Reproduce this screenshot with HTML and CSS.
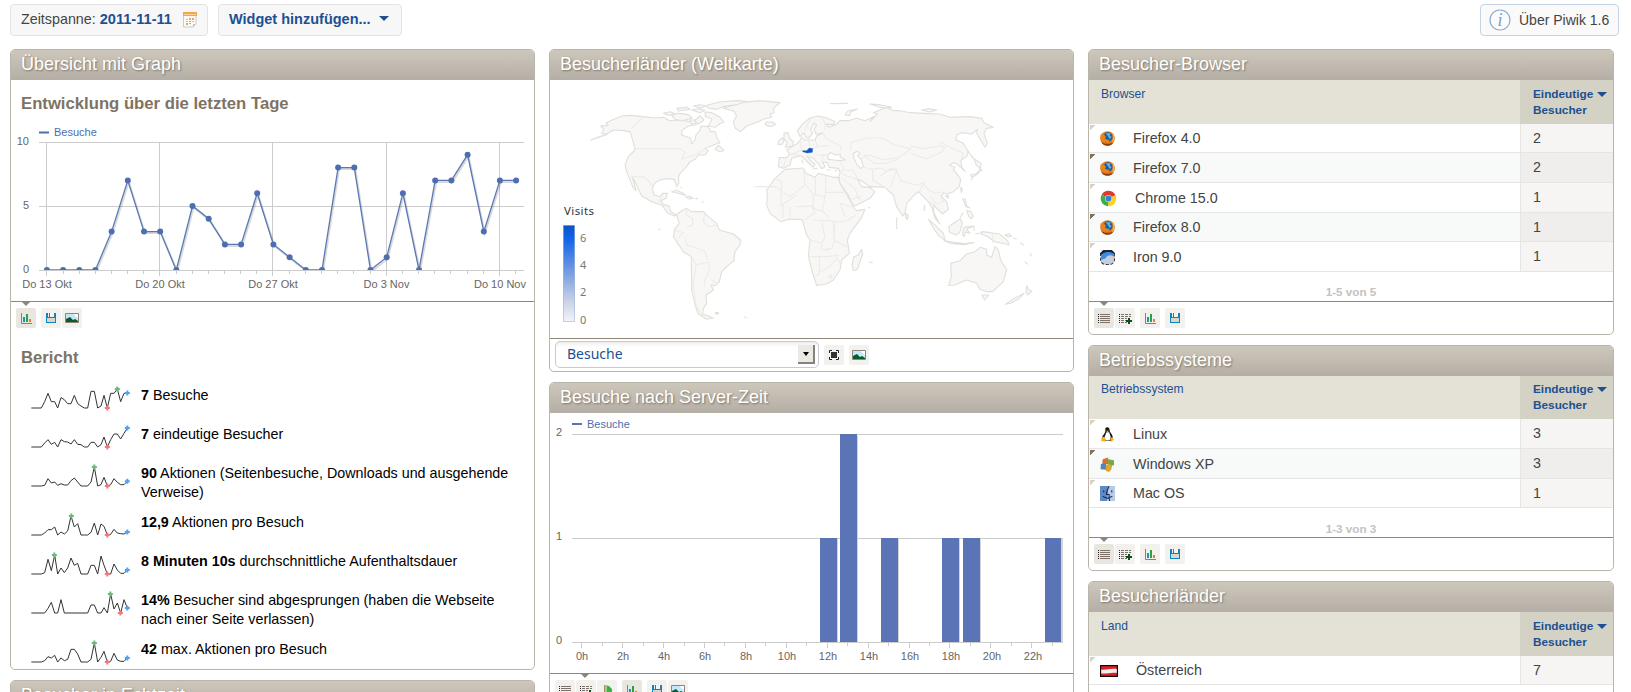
FILE: index.html
```html
<!DOCTYPE html>
<html lang="de">
<head>
<meta charset="utf-8">
<title>Piwik – Dashboard</title>
<link rel="stylesheet" href="styles.css">
</head>
<body>
<svg class="defs" width="0" height="0" aria-hidden="true">
  <defs>
    <marker id="dot" markerUnits="userSpaceOnUse" markerWidth="8" markerHeight="8" refX="4" refY="4"><circle cx="4" cy="4" r="3" fill="#4d6fb0"/></marker>
    <linearGradient id="scale" x1="0" y1="0" x2="0" y2="1"><stop offset="0" stop-color="#0d52c8"/><stop offset=".14" stop-color="#1164ea"/><stop offset=".5" stop-color="#7a9fdf"/><stop offset=".8" stop-color="#ccd4e8"/><stop offset="1" stop-color="#f2f3f8"/></linearGradient>
    <path id="mk" d="M-7.500-3h4.500v-4.500h6v4.500h4.500v6h-4.500v4.500h-6v-4.500h-4.500z"/>
    <symbol id="i-chart" viewBox="0 0 20 20"><path d="M5.500 5v10.500H16" fill="none" stroke="#8a7d72"/><path fill="#1795c9" d="M7 9h2v5H7z"/><path fill="#2ca13c" d="M10 6h2v8h-2z"/><path fill="#f47e1c" d="M13 11h2v3h-2z"/></symbol>
    <symbol id="i-save" viewBox="0 0 20 20"><path fill="#0c84c4" d="M5 5h2v4h1V5h1v4h4V5h2v10H5z"/><path fill="#fff" d="M9 5h1v3H9zM12 5h1v3h-1z"/><path fill="#d9d6cd" d="M6 10h8v4H6z"/></symbol>
    <symbol id="i-img" viewBox="0 0 20 20"><path fill="#c3e7fb" stroke="#8f8579" d="M3.500 5.500h13v9h-13z"/><path fill="#fff" d="M12 6h4v4l-2-1z"/><path fill="#0a5a2a" d="M4 14v-3l2-1 2-1 3 3 2-1 3 2v1z"/></symbol>
    <symbol id="i-table" viewBox="0 0 20 20"><path stroke="#222" stroke-dasharray="1 1" d="M4.500 6v9" /><path stroke="#7d7168" d="M6 6.500h10M6 8.500h10M6 10.500h10M6 12.500h10M6 14.500h10"/></symbol>
    <symbol id="i-more" viewBox="0 0 20 20"><path stroke="#222" stroke-dasharray="1 1" d="M4.500 6v9" /><path stroke="#7d7168" stroke-dasharray="3 1" d="M6 6.500h10M6 8.500h10M6 10.500h6M6 12.500h5M6 14.500h6"/><path stroke="#0a4f22" stroke-width="2" d="M14 10v6M11 13h6"/></symbol>
    <symbol id="i-goal" viewBox="0 0 20 20"><path stroke="#a89060" d="M7.500 5v11"/><path fill="#3fae49" d="M8 5l4 1 3 3v7l-3-2-4-1z"/><path fill="#8bd58c" d="M8 5h2v7H8z"/></symbol>
    <symbol id="i-full" viewBox="0 0 20 20"><path fill="none" stroke="#222" d="M5.500 8V5.500H8M12 5.500h2.500V8M14.500 12v2.500H12M8 14.500H5.500V12"/><path fill="#333" d="M7 7h6v6H7z"/></symbol>
    <symbol id="b-ff" viewBox="0 0 14 14"><circle cx="7" cy="7" r="6.800" fill="#e27a1d"/><path fill="#8b3c12" d="M1 10a6.700 6.700 0 0 0 12 0c-2 2-9 3-12 0z"/><circle cx="7.500" cy="5.500" r="4.300" fill="#1c5f9c"/><path fill="#5fb4e0" d="M5.500 2h4.500l-1 2.500 2 1-2 2-1-2z"/><path fill="#e98322" d="M.4 3l1.600 1 2-.6L5.500 5.500 4.500 7l3 1.500L9 8 8 10.500 4 10 1 8z"/><path fill="#f8b53c" d="M11.500 2C14 4 14.500 9 11 12c1-3 1.500-6 .5-10z"/></symbol>
    <symbol id="b-cr" viewBox="0 0 16 16"><path fill="#dd3b2e" d="M8 8L1.700 4.200A7.300 7.300 0 0 1 14.600 5z"/><path fill="#fbd01f" d="M8 8l6.600-3A7.300 7.300 0 0 1 7.500 15.300z"/><path fill="#3fae49" d="M8 8l-.5 7.300A7.300 7.300 0 0 1 1.700 4.200z"/><circle cx="8" cy="8" r="3.300" fill="#dfe9f5"/><circle cx="8" cy="8" r="2.800" fill="#3a7fd0"/></symbol>
    <symbol id="b-ir" viewBox="0 0 14 14"><rect x=".5" y=".5" width="13" height="13" rx="4.500" fill="#c9ccdb" stroke="#3a3f4a" stroke-dasharray="3 1.500"/><path fill="#1c2430" d="M3 0h8l3 3v1L8 2 0 5V3z"/><path fill="#3a8de0" d="M1 5c3-4 9-4 12-1v2C9 4 7 5 5 8L1 9z"/></symbol>
    <symbol id="o-lx" viewBox="0 0 14 14"><path fill="#151515" d="M5 1c2-1.500 4-.5 4 2 0 2 3 4 3 7l-2 3H5l-3-3c0-2 3-4 3-6z"/><path fill="#fff" d="M6 5h2.500l1.500 4-1 3.500H5.500L4 10z"/><path fill="#f5b614" d="M5.500 3.500h3L7 5zM1.500 10l2-1 2 3-.5 1.800L1 13zM9.500 10l2.500-.5.8 2.500L10 14z"/></symbol>
    <symbol id="o-win" viewBox="0 0 14 14"><path fill="#d8702f" d="M2.500 2l5-1.500v6L2 7z"/><path fill="#78a845" d="M7.500 2l5.500 1v5L7 7z"/><path fill="#4f86bd" d="M.8 6.500L5.500 6l.5 6-5.500-.5z"/><path fill="#dfa52e" d="M5.500 7l6 .5-1 4.500-2 2-3-1z"/></symbol>
    <symbol id="o-mac" viewBox="0 0 14 14"><path fill="#5d8bc8" d="M0 0h8L7 14H0z"/><path fill="#b5cbeb" d="M8 0h6v14H7z"/><path fill="none" stroke="#1b2c55" d="M8.500 0C7 3 6 6 6 8h2.500c0 2 0 4 .5 6M3.500 4v2M11 4v2M2.500 9.500c2.500 2.200 6 2.200 9 0"/></symbol>
  </defs>
</svg>

<header class="topbar">
  <div class="pill period"><span>Zeitspanne: <b>2011-11-11</b></span>
    <svg width="14" height="16" viewBox="0 0 14 16"><path fill="#fbfaf7" stroke="#cfcbc4" d="M.5 1.500h12.500v10l-3 3.500H.5z"/><path fill="#f5a646" d="M0 0h14v4H0z"/><path fill="#fbd3a0" d="M1 2h12v1H1z"/><path fill="#e9a75a" d="M6 6h2v2H6zM9 6h2v2H9zM3 9h2v1H3zM6 9h2v1H6zM3 11h2v2H3zM6 11h2v1H6z"/><path fill="#c9c4bb" d="M3 7h2v1H3zM9 9h2v1H9zM10 12h3l-3 3z"/></svg>
  </div>
  <div class="pill add"><b>Widget hinzufügen...</b><i class="caret"></i></div>
  <div class="pill about"><svg width="22" height="22" viewBox="0 0 22 22"><circle cx="11" cy="11" r="10" fill="#fbfcfe" stroke="#8ea9cf" stroke-width="1.200"/><text x="11" y="17" text-anchor="middle" class="info">i</text></svg><span>Über Piwik 1.6</span></div>
</header>

<main class="dashboard">
  <section class="col">
    <article class="widget overview">
      <h1>Übersicht mit Graph</h1>
      <h2>Entwicklung über die letzten Tage</h2>
      <svg class="plot" width="523" height="178" viewBox="11 123 523 178">
        <path stroke="#4d6fb0" stroke-width="2" d="M39 132.500h10"/><text class="lg" x="54" y="136">Besuche</text>
        <path stroke="#ccc" fill="none" d="M39 142.500h485M39 206.500h485M39 270.500h485M46.500 142v134M159.500 142v134M272.500 142v134M386.500 142v134M499.500 142v134M63.500 271v3M79.500 271v3M95.500 271v3M111.500 271v3M127.500 271v3M143.500 271v3M176.500 271v3M192.500 271v3M208.500 271v3M224.500 271v3M240.500 271v3M256.500 271v3M289.500 271v3M305.500 271v3M321.500 271v3M337.500 271v3M353.500 271v3M370.500 271v3M402.500 271v3M418.500 271v3M434.500 271v3M450.500 271v3M467.500 271v3M483.500 271v3M515.500 271v3"/>
        <g class="ax"><text x="29" y="145" text-anchor="end">10</text><text x="29" y="209" text-anchor="end">5</text><text x="29" y="273" text-anchor="end">0</text>
        <g text-anchor="middle"><text x="47" y="288">Do 13 Okt</text><text x="160" y="288">Do 20 Okt</text><text x="273" y="288">Do 27 Okt</text><text x="386.500" y="288">Do 3 Nov</text><text x="500" y="288">Do 10 Nov</text></g></g>
        <clipPath id="above"><path d="M11 123h523v147H11z"/></clipPath>
        <g clip-path="url(#above)" fill="none">
        <polyline stroke="#000" stroke-opacity=".15" stroke-width="2" transform="translate(1 1.500)" points="95.4,270 111.6,231.6 127.8,180.4 144,231.6 160.2,231.6 176.3,270 192.5,206 208.7,218.8 224.9,244.4 241.1,244.4 257.2,193.2 273.4,244.4 289.6,257.2 305.8,270 322,270 338.1,167.6 354.3,167.6 370.5,270 386.7,257.2 402.9,193.2 419,270 435.2,180.4 451.4,180.4 467.6,154.8 483.8,231.6 499.9,180.4 516.1,180.4"/>
        <polyline class="series" points="46.9,270 63.1,270 79.3,270 95.4,270 111.6,231.6 127.8,180.4 144,231.6 160.2,231.6 176.3,270 192.5,206 208.7,218.8 224.9,244.4 241.1,244.4 257.2,193.2 273.4,244.4 289.6,257.2 305.8,270 322,270 338.1,167.6 354.3,167.6 370.5,270 386.7,257.2 402.9,193.2 419,270 435.2,180.4 451.4,180.4 467.6,154.8 483.8,231.6 499.9,180.4 516.1,180.4"/></g>
      </svg>
      <div class="tools"><i class="pointer"></i><svg class="tool on"><use href="#i-chart"/></svg><svg class="tool gap"><use href="#i-save"/></svg><svg class="tool"><use href="#i-img"/></svg></div>
      <h2 class="report">Bericht</h2>
      <ul class="sparks">
        <li><svg viewBox="0 0 300 75"><polyline points="4,66 14,66 24,66 34,66 44,47 54,22 64,47 74,47 83,66 93,35 103,41 113,53 123,53 133,28 143,53 153,60 163,66 173,66 183,16 193,16 203,66 213,60 222,28 232,66 242,22 252,22 262,9 272,47 282,22 292,22"/><use href="#mk" class="hi" x="262" y="9"/><use href="#mk" class="lo" x="232" y="66"/><use href="#mk" class="now" x="292" y="21"/></svg><p><b>7</b> Besuche</p></li>
        <li><svg viewBox="0 0 300 75"><polyline points="4,66 14,66 24,66 34,66 44,54 54,44 64,58 74,52 83,66 93,44 103,50 113,51 123,57 133,44 143,58 153,59 163,66 173,66 183,52 193,52 203,66 213,59 222,36 232,66 242,44 252,27 262,27 272,42 282,25 292,9"/><use href="#mk" class="lo" x="232" y="66"/><use href="#mk" class="now" x="292" y="9"/></svg><p><b>7</b> eindeutige Besucher</p></li>
        <li class="two"><svg viewBox="0 0 300 75"><polyline points="4,66 14,66 24,66 34,66 44,64 54,44 64,57 74,54 83,64 93,59 103,63 113,63 123,50 133,42 143,54 153,66 163,66 173,66 183,54 193,9 203,66 213,62 222,40 232,66 242,62 252,44 262,55 272,62 282,62 292,52"/><use href="#mk" class="hi" x="193" y="9"/><use href="#mk" class="lo" x="232" y="66"/><use href="#mk" class="now" x="292" y="52"/></svg><p><b>90</b> Aktionen (Seitenbesuche, Downloads und ausgehende Verweise)</p></li>
        <li><svg viewBox="0 0 300 75"><polyline points="4,66 14,66 24,66 34,66 44,60 54,50 64,50 74,42 83,66 93,57 103,63 113,54 123,9 133,42 143,32 153,66 163,66 173,66 183,58 193,30 203,66 213,33 222,40 232,66 242,64 252,49 262,60 272,62 282,63 292,57"/><use href="#mk" class="hi" x="124" y="9"/><use href="#mk" class="lo" x="232" y="66"/><use href="#mk" class="now" x="292" y="57"/></svg><p><b>12,9</b> Aktionen pro Besuch</p></li>
        <li><svg viewBox="0 0 300 75"><polyline points="4,66 14,66 24,66 34,66 44,62 54,22 64,56 74,9 83,66 93,48 103,62 113,48 123,18 133,40 143,34 153,66 163,66 173,66 183,40 193,40 203,66 213,12 222,40 232,66 242,66 252,36 262,54 272,64 282,64 292,54"/><use href="#mk" class="hi" x="73" y="9"/><use href="#mk" class="lo" x="232" y="66"/><use href="#mk" class="now" x="292" y="54"/></svg><p><b>8 Minuten 10s</b> durchschnittliche Aufenthaltsdauer</p></li>
        <li class="two"><svg viewBox="0 0 300 75"><polyline points="4,66 44,66 54,52 64,34 74,66 83,66 93,26 103,66 173,66 183,42 193,42 203,66 213,66 222,50 232,66 242,9 252,54 262,36 272,66 282,26 292,51"/><use href="#mk" class="hi" x="241" y="9"/><use href="#mk" class="lo" x="271" y="66"/><use href="#mk" class="now" x="292" y="51"/></svg><p><b>14%</b> Besucher sind abgesprungen (haben die Webseite nach einer Seite verlassen)</p></li>
        <li><svg viewBox="0 0 300 75"><polyline points="4,66 14,66 24,66 34,66 44,62 54,50 64,54 74,46 83,66 93,54 103,62 113,58 123,28 133,28 143,42 153,66 163,66 173,66 183,58 193,9 203,66 213,52 222,34 232,66 242,64 252,40 262,60 272,64 282,64 292,54"/><use href="#mk" class="hi" x="193" y="9"/><use href="#mk" class="lo" x="232" y="66"/><use href="#mk" class="now" x="292" y="54"/></svg><p><b>42</b> max. Aktionen pro Besuch</p></li>
      </ul>
    </article>
    <article class="widget"><h1>Besucher in Echtzeit</h1></article>
  </section>

  <section class="col">
    <article class="widget map">
      <h1>Besucherländer (Weltkarte)</h1>
      <svg class="plot" width="523" height="258" viewBox="550 80 523 258">
        <g class="land" transform="translate(580 90) scale(.33333)">
          <path d="M32 150L62 140 82 133 65 130 72 118 62 108 85 106 78 98 105 86 125 78 150 76 190 80 225 84 250 82 270 92 300 90 330 95 345 90 360 78 372 90 358 100 345 105 325 108 305 122 305 135 332 145 335 162 345 150 348 135 360 122 363 108 385 110 392 125 405 125 412 145 420 158 400 165 375 175 385 182 375 195 355 195 345 208 330 215 320 230 300 250 295 262 297 278 290 290 283 268 262 266 240 270 225 278 217 295 222 315 240 320 248 310 262 310 258 325 243 332 250 345 268 348 272 365 290 375 283 378 262 368 245 345 215 335 185 318 172 290 158 262 168 302 158 290 148 265 140 245 135 225 145 200 165 180 158 150 150 125 130 122 100 120 80 132Z"/>
          <path d="M445 50L480 38 540 32 600 38 580 55 582 68 570 72 575 82 550 88 535 95 500 108 482 125 466 115 460 95 470 78 462 64 430 55ZM555 100l5-4 20 1 7 6-12 6-15-2zM405 178l10-12 10 8 6 8-12 3zM275 305l15-4 18 8 10 8-18-6zM318 322l10-3 12 6-10 2zM346 326h8M368 332v6M303 290l2 6M406 668h9v4h-7zM493 680l8 3M235 418h7M364 257h1"/>
          <path d="M250 70l20-5 15 6-20 5zM275 76l20-6 30 4 12 10-30 8-22-4zM290 55l30-3 10 6-35 5zM335 60l20-4 20 5-15 7zM340 48l20-4 18 4-15 6zM375 66l20 2 25 14 12 14-14 6-12 10-22-4 8-12 4-10-20-6zM330 90l12 0 8 8-15 4zM380 46l40-10 50-4 30 2-30 10-40 6-20 8-25-4z"/>
          <path d="M290 375L305 362 320 355 335 365 370 365 385 380 410 400 418 420 460 432 482 450 480 465 465 485 462 512 440 530 425 545 418 575 405 587 393 585 400 600 378 615 380 640 370 655 368 672 400 684 380 688 355 672 345 645 335 600 334 500 310 485 280 440 285 415 298 400Z"/>
          <path class="border" d="M165 176H300L315 187 305 207 350 193 385 170M190 80L155 115M150 258L195 262 220 290M235 335l10-10M268 348l-15-6M322 355l-4 20 20 10v20l-15 5M285 420l25 8-15 15M315 440l5 25 20 5 35 15 8 25M334 500l15 24 35-8 5 20-16 40 0 12M348 525l-8 60 8 60 18 30M375 370l-5 25 15 15 25-5M393 568l20 15"/>
        </g>
        <g class="land" transform="translate(790 90) scale(.33333)">
          <path d="M22 122L40 100 60 84 85 78 110 84 135 95 130 104 108 102 118 112 140 102 150 92 175 92 200 85 225 92 250 80 240 95 262 72 250 68 290 52 310 62 330 62 360 68 400 70 450 72 480 82 540 80 575 85 582 98 610 112 590 115 582 130 592 160 585 172 572 150 560 130 562 118 545 132 515 128 500 135 498 150 520 160 535 185 530 200 512 212 516 232 525 244 512 232 502 222 490 218 478 226 495 232 490 240 500 250 512 268 508 290 490 305 470 312 460 308 455 320 470 335 475 358 458 372 440 355 432 345 430 365 445 395 450 402 435 385 425 350 415 335 400 320 385 305 370 318 350 340 345 370 338 378 320 350 310 315 298 305 285 292 240 290 210 270 203 268 215 290 238 292 255 305 240 325 195 348 187 342 175 315 150 280 147 262 150 245 145 235 118 232 112 218 98 216 105 230 95 236 85 222 70 205 50 198 62 212 75 222 70 232 62 225 45 208 35 198 20 200 5 205 0 225 -20 235 -35 230 -32 203 -8 202 -2 192 -10 180 5 170 20 162 30 152 35 142 45 150 75 150 80 138 98 130 78 132 72 118 80 105 72 100 62 118 68 130 55 145 45 140 42 128 30 140Z"/>
          <path d="M-15 238L40 234 48 250 75 262 85 250 130 262 145 262 150 280 185 340 192 355 200 362 225 358 215 382 180 430 172 450 178 490 155 510 150 540 130 570 110 582 80 586 68 550 55 500 60 450 50 435 40 400 35 388-5 388-28 395-60 370-70 345-68 320-70 300-45 265Z"/>
          <path d="M-18 130l12-2 4 16 12 12-2 12-22 4 6-12-10-14zM-34 152l10-8 6 4-4 14-14 2zM215 478l3 14-16 46-12 4-4-17 6-25 13-5zM347 370l8 8-3 10-5-4z"/>
          <path d="M482 520L510 512 530 492 555 485 570 472 590 478 590 495 605 502 615 470 625 480 632 510 650 540 640 575 608 605 590 605 570 598 560 580 530 570 495 585 476 586 484 560ZM576 615l20 0-12 15zM710 587l6 12 10 4-14 12-4-12zM702 610l-15 16-25 14-16 3 25-17 20-10z"/>
          <path d="M416 388l20 18 24 24 6 22-20-15-18-26zM462 452l30 5 30 4 30-3-30 6-40-4zM476 410l20-14 15-10 6 14-8 28-10 7-20-8zM522 412l30-4-22 10 10 12-14-4-3 14-6-6zM575 425l20 2 35 6 22 18 6 14-25-6-20-4-18-14-20-8zM645 435l12-4 8 8-10 2zM670 444l10 4M690 458l12 8M722 488l1 10M704 515l10 8M518 326l8 2 4 20 10 6-12-4zM530 362l12 2 8 14-6 8-8-8zM510 382l10-14M512 292l5 6-3 10zM466 318l10-2-2 8zM543 195l10 14 5 14 18 18-12 4-4 6-18 4 2 6 8-2 14-10 8-28-20-14M532 180l16 24M548 260l-4 12M403 345v18M320 382v35M235 353h5M238 517h10M552 408v15M556 432l20-4M120 41l55-1M240 42l30 2 35 8-20 2-22-4zM165 75l8-12 30-6-20 8-4 12zM395 60l20-4 25 4-20 6zM36 208l3 12M68 238l16-4M110 240l12 0M134 243l8-3"/>
          <path class="sea" d="M115 208l-2-14 10-6 15 8 14-4-2 8 16 10-20 2-14-2zM190 190l12-6 8 6-8 6 12 14 6 20-8 6-12-14-8-18z"/>
          <path class="border" d="M62 84L45 120M92 80l14 20-2 20M95 125l15 22 40 20 5 15M30 155l5 25-35 15M75 150l8 20-40 15M85 170l30-4M80 195l35 0M95 215l5-20M55 150l5 18M-2 192l35 5M-12 205l-8 28M182 180l0-22 45-14 50 0 35 20 50 12-15 14-20 12-45 8-48-16-22 14M360 168l40 8 50-8 15 4-10 14-45 20-48-16M450 155l35 20 35 14-6 20M215 230l30 8 25-4 20 8 28-4M222 195l30 25 35 0 20-6 20-8M248 240l0 30 40 24M270 260l30-24 20 2-10 30-8 25M318 240l16 34 48 12 20-8-14 28M400 280l15 20 20 10 20-5M420 320l20 22 20-8-10-20M415 335l20 10M150 212l12 26-14 10 22 10 30 10M165 240l24 0 14 26M155 265l40 30 10 30 10 6M185 328l30-10M40 235l6 50-46 35-45-30-60 0M-45 265l20 10-2 75M46 285l25 28 36 8M76 262v52M107 257v50h55M107 307l-10 55 20 20M-25 345l45-30M20 350l45-2 10 20-30 22M70 315v40l30 10M70 390l50 2 30 4M150 395l20-2 28-18M150 340l16 40M150 340l35 10M60 450l35 10 10-20-10-45M95 460l0 20 30-5 8-20-3-60M135 400l-4 50 40 20M55 500l50 0 40-4M105 480l12 0M88 502l0 50-16 10M88 545l30-14 22-25M140 500l10 20M115 560l10-6 0 10zM-20 345l-2 40M0 350l0 38M608 430v28"/>
          <path d="M38 182l12 0 8-8 10 2-1 11-15 2-14-4z" class="at"/>
        </g>
        <g class="mt"><text x="564" y="215" class="mv">Visits</text><text x="580" y="242">6</text><text x="580" y="269">4</text><text x="580" y="296">2</text><text x="580" y="324">0</text></g>
        <rect x="563.500" y="225.500" width="11" height="96" fill="url(#scale)" stroke="#1c4fa8" stroke-opacity=".25"/>
      </svg>
      <div class="tools select-row"><div class="select"><span>Besuche</span><i class="drop"></i></div><svg class="tool gap"><use href="#i-full"/></svg><svg class="tool gap"><use href="#i-img"/></svg></div>
    </article>
    <article class="widget">
      <h1>Besuche nach Server-Zeit</h1>
      <svg class="plot" width="523" height="260" viewBox="550 413 523 260">
        <path stroke="#5a74b5" stroke-width="2" d="M572 424h10"/><text class="lg" x="587" y="428">Besuche</text>
        <path stroke="#ccc" d="M572 434.500h491M572 538.500h491M572 642.500h491M581.500 643v5M622.500 643v5M663.500 643v5M704.500 643v5M745.500 643v5M786.500 643v5M827.500 643v5M868.500 643v5M909.500 643v5M949.500 643v5M990.500 643v5M1031.500 643v5M602.500 643v3M643.500 643v3M684.500 643v3M724.500 643v3M765.500 643v3M806.500 643v3M847.500 643v3M888.500 643v3M929.500 643v3M970.500 643v3M1011.500 643v3M1052.500 643v3"/>
        <path fill="#d4d4d4" d="M835 539h3v103h-3zM855 436h3v206h-3zM896 539h3v103h-3zM957 539h3v103h-3zM978 539h3v103h-3zM1060 539h3v103h-3z"/>
        <path fill="#5a74b5" d="M820 538h17v104h-17zM840 434h17v208h-17zM881 538h17v104h-17zM942 538h17v104h-17zM963 538h17v104h-17zM1045 538h16v104h-16z"/>
        <g class="ax"><text x="562" y="436" text-anchor="end">2</text><text x="562" y="540" text-anchor="end">1</text><text x="562" y="644" text-anchor="end">0</text>
        <g text-anchor="middle"><text x="582" y="660">0h</text><text x="623" y="660">2h</text><text x="664" y="660">4h</text><text x="705" y="660">6h</text><text x="746" y="660">8h</text><text x="787" y="660">10h</text><text x="828" y="660">12h</text><text x="869" y="660">14h</text><text x="910" y="660">16h</text><text x="951" y="660">18h</text><text x="992" y="660">20h</text><text x="1033" y="660">22h</text></g></g>
      </svg>
      <div class="tools"><i class="pointer second"></i><svg class="tool"><use href="#i-table"/></svg><svg class="tool"><use href="#i-more"/></svg><svg class="tool"><use href="#i-goal"/></svg><svg class="tool on gap"><use href="#i-chart"/></svg><svg class="tool gap"><use href="#i-save"/></svg><svg class="tool"><use href="#i-img"/></svg></div>
    </article>
  </section>

  <section class="col wide">
    <article class="widget">
      <h1>Besucher-Browser</h1>
      <div class="thead"><span>Browser</span><b>Eindeutige<i class="caret"></i><br>Besucher</b></div>
      <div class="row short"><span><svg width="15" height="15"><use href="#b-ff"/></svg>Firefox 4.0</span><em>2</em></div>
      <div class="row alt"><span><svg width="15" height="15"><use href="#b-ff"/></svg>Firefox 7.0</span><em>2</em></div>
      <div class="row"><span><svg width="17" height="17"><use href="#b-cr"/></svg>Chrome 15.0</span><em>1</em></div>
      <div class="row alt short"><span><svg width="15" height="15"><use href="#b-ff"/></svg>Firefox 8.0</span><em>1</em></div>
      <div class="row"><span><svg width="15" height="15"><use href="#b-ir"/></svg>Iron 9.0</span><em>1</em></div>
      <div class="pages">1-5 von 5</div>
      <div class="tools"><i class="pointer"></i><svg class="tool on"><use href="#i-table"/></svg><svg class="tool"><use href="#i-more"/></svg><svg class="tool gap"><use href="#i-chart"/></svg><svg class="tool gap"><use href="#i-save"/></svg></div>
    </article>
    <article class="widget">
      <h1>Betriebssysteme</h1>
      <div class="thead tight"><span>Betriebssystem</span><b>Eindeutige<i class="caret"></i><br>Besucher</b></div>
      <div class="row"><span><svg width="15" height="15"><use href="#o-lx"/></svg>Linux</span><em>3</em></div>
      <div class="row alt"><span><svg width="15" height="15"><use href="#o-win"/></svg>Windows XP</span><em>3</em></div>
      <div class="row short"><span><svg width="15" height="15"><use href="#o-mac"/></svg>Mac OS</span><em>1</em></div>
      <div class="pages late">1-3 von 3</div>
      <div class="tools"><i class="pointer"></i><svg class="tool on"><use href="#i-table"/></svg><svg class="tool"><use href="#i-more"/></svg><svg class="tool gap"><use href="#i-chart"/></svg><svg class="tool gap"><use href="#i-save"/></svg></div>
    </article>
    <article class="widget">
      <h1>Besucherländer</h1>
      <div class="thead"><span>Land</span><b>Eindeutige<i class="caret"></i><br>Besucher</b></div>
      <div class="row short"><span><svg width="18" height="12" viewBox="0 0 18 12"><path fill="#d8232a" stroke="#1a0505" stroke-width="1.200" d="M.6.6h16.800v10.800H.6z"/><path fill="#f3eeee" d="M1.200 4.500c5 1 9-1.500 15.600-.5V8c-5.600-1-10 1-15.600.5z"/></svg>Österreich</span><em>7</em></div>
      <div class="row plain"></div>
    </article>
  </section>
</main>
</body>
</html>
```
FILE: styles.css
```css
* { box-sizing: border-box; }
html, body { height: 692px; overflow: hidden; }
body { margin: 0; background: #fff; color: #444; font-family: "Liberation Sans", Arial, sans-serif; font-size: 14.3px; }
h1, h2, p, ul { margin: 0; padding: 0; }
svg { display: block; flex: none; }
.defs { position: absolute; }

.topbar { display: flex; height: 49px; padding: 4px 12px 0 10px; gap: 10px; }
.pill { display: flex; align-items: center; height: 32px; border: 1px solid #e3e3e3; border-radius: 4px; background: #f7f7f7; padding: 0 10px; white-space: nowrap; }
.pill span, .pill > b { padding-bottom: 3px; }
.pill b { color: #1d5091; }
.period { width: 198px; justify-content: space-between; }
.period b { font-size: 14.600px; }
.add { width: 184px; }
.add b { font-size: 14.500px; }
.caret { display: inline-block; border: 4.500px solid transparent; border-top: 5px solid #1d5091; border-bottom: 0; }
.add .caret { margin-left: 8px; margin-top: -3px; border-width: 5px 5px 0; }
.pill.about { margin-left: auto; width: 139px; padding: 0 8px; gap: 8px; border-color: #c5d3e8; background: #fafafa; font-size: 14px; }
.about span { padding-bottom: 0; }
.info { font: italic 18px "Liberation Serif", serif; fill: #7f9cc6; }

.dashboard { display: grid; grid-template-columns: 525px 525px 526px; gap: 14px; padding-left: 10px; align-items: start; }
.col { display: flex; flex-direction: column; gap: 10px; }
.widget { border: 1px solid #bab5aa; border-radius: 5px; overflow: hidden; background: #fff; }
.overview { height: 621px; }
.map { height: 323px; }
h1 { height: 30px; padding-left: 10px; line-height: 29px; font-size: 18px; font-weight: normal; color: #fff; text-shadow: 1px 1px 2px #7e7363; background: linear-gradient(#cdc7bb, #b4aea6); }
h2 { height: 43px; padding-left: 10px; line-height: 47px; font-size: 16.700px; color: #7e7363; }

.lg { font-size: 11px; fill: #4d6fb0; }
.ax { font-size: 11px; fill: #666; }
.series { stroke: #5a78b5; stroke-width: 1.300; marker: url(#dot); }

.tools { position: relative; display: flex; height: 33px; padding: 6px 5px 0; gap: 1px; border-top: 1px solid #8f8579; }
.tool { width: 20px; height: 20px; border-radius: 2px; background: #f2f1ed; }
.tool.on { background: #e8e7df; }
.tool.gap { margin-left: 4px; }
.pointer { position: absolute; left: 11px; top: 0; border: 4px solid transparent; border-top-color: #8f8579; border-bottom: 0; }
.pointer.second { left: 31px; }

.report { height: 51px; line-height: 47px; }
.sparks { list-style: none; padding-left: 19px; color: #000; }
.sparks li { display: flex; height: 39px; }
.sparks li.two { height: 49px; }
.sparks svg { width: 100px; height: 25px; margin-top: 1px; }
.sparks p { width: 375px; margin: 1px 0 0 11px; line-height: 19px; }
.sparks polyline { fill: none; stroke: #333; stroke-width: 3; }
.hi { fill: #6cba76; }
.lo { fill: #fb7672; }
.now { fill: #4da3fb; }

.land path { fill: #f8f7f5; stroke: #e0dfda; stroke-width: 3.300; stroke-linejoin: round; }
.land .border { fill: none; stroke: #ecebe7; }
.land .sea { fill: #fff; }
.land .at { fill: #0d55cc; stroke: #0d4db5; stroke-width: 1; }
.mt { font: 11px "Noto Sans", sans-serif; fill: #777; }
.mv { font-size: 11.500px; fill: #333; letter-spacing: .4px; }
.select-row { padding-top: 2px; }
.select-row .tool { margin-top: 4px; }
.select { display: flex; align-items: center; justify-content: space-between; width: 264px; height: 27px; padding: 0 3px 0 11px; border: 1px solid #c9c9d0; border-radius: 5px; background: linear-gradient(#ededed, #fff 5px); font: 14px "Noto Sans", sans-serif; color: #1d5091; }
.select span { padding-bottom: 2px; }
.drop { display: grid; place-items: center; width: 17px; height: 19px; background: #ece9e4; border-right: 2px solid #85817b; border-bottom: 2px solid #85817b; }
.drop::before { content: ""; border: 3.500px solid transparent; border-top: 4px solid #000; border-bottom: 0; }

.thead, .row { display: grid; grid-template-columns: 431px 93px; }
.thead { height: 44px; font-size: 12.100px; color: #1d5091; line-height: 16px; background: #e4e2d7; }
.thead span { padding: 6px 0 0 12px; }
.thead b { padding: 6px 0 0 13px; font-size: 11.800px; background: #d4d1c5; }
.thead .caret { margin: 0 0 1px 4px; border-width: 5px 5px 0; }
.thead.tight { height: 43px; }
.tight span, .tight b { padding-top: 5px; }
.row { height: 30px; line-height: 28px; border-bottom: 1px solid #e5e5e5; background: linear-gradient(135deg, #d8d2c4 4px, transparent 4px) 1px 1px no-repeat #fff; }
.row.short { height: 29px; }
.row.plain { background: #fff; }
.row.alt { background: linear-gradient(135deg, #7e7363 4px, transparent 4px) 1px 1px no-repeat #f8faf9; }
.row span { display: flex; align-items: center; padding-left: 11px; gap: 18px; }
.row span svg { margin-top: 1px; }
.row em { font-style: normal; padding-left: 12px; background: #f6f5f4; border-left: 1px solid #e5e5e5; }
.row.alt em { background: #efeeed; }
.pages { height: 29px; padding-top: 13px; text-align: center; font-size: 11.700px; line-height: 14px; font-weight: bold; color: #c3c3c3; }
.pages.late { padding-top: 14px; }
```
